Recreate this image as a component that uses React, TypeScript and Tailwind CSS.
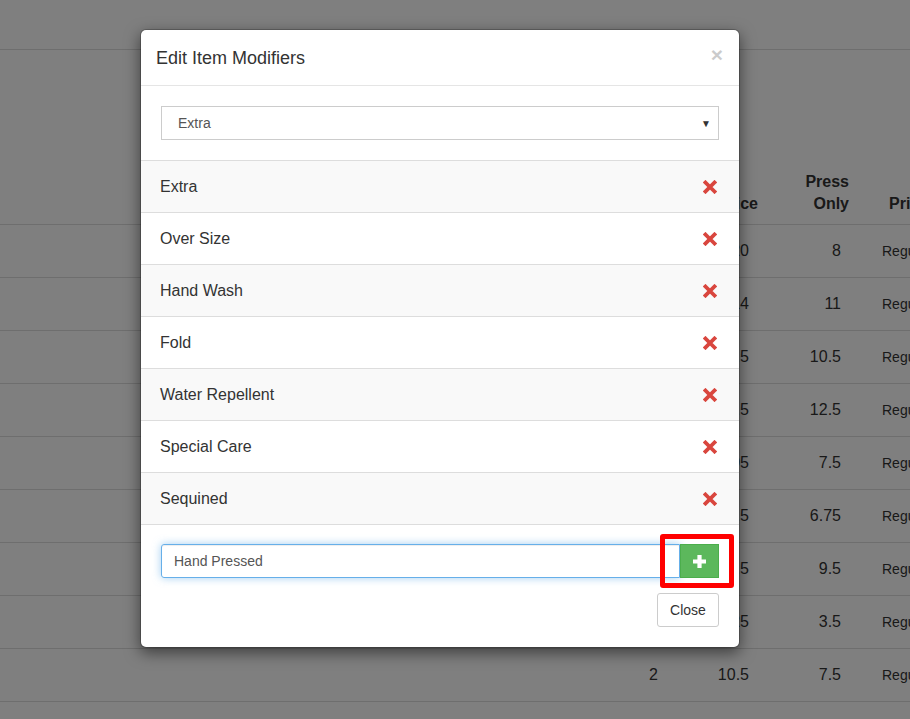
import React from "react";

const COLS = "grid grid-cols-[575px_93px_91px_91px_1fr]";

function RemoveIcon() {
  return (
    <svg width="14" height="14" viewBox="0 0 14 14" aria-hidden="true">
      <path d="M2.5 2.5 L11.5 11.5 M11.5 2.5 L2.5 11.5" stroke="#d9463e" strokeWidth="3.8" strokeLinecap="square" fill="none" />
    </svg>
  );
}

function PlusIcon() {
  return (
    <svg width="15" height="15" viewBox="0 0 15 15" aria-hidden="true">
      <path d="M7.5 1 V14 M1 7.5 H14" stroke="#ffffff" strokeWidth="4.2" fill="none" />
    </svg>
  );
}

export default function App() {
  const rows: [string, string, string][] = [
    ["1", "20", "8"],
    ["2", "14", "11"],
    ["1", "12.5", "10.5"],
    ["1", "14.5", "12.5"],
    ["1", "9.95", "7.5"],
    ["1", "8.5", "6.75"],
    ["1", "12.5", "9.5"],
    ["1", "5.25", "3.5"],
    ["2", "10.5", "7.5"],
  ];
  const mods = ["Extra", "Over Size", "Hand Wash", "Fold", "Water Repellent", "Special Care", "Sequined"];

  return (
    <div className="relative h-[719px] w-[910px] overflow-hidden bg-white font-['Liberation_Sans',Arial,sans-serif] text-[#333]">
      {/* background page */}
      <div className="h-[50px] border-b border-[#ddd]" />
      <div className={`${COLS} h-[175px] border-b border-[#ddd] items-end pb-[9px] text-[16px] font-bold leading-[22px]`}>
        <div />
        <div className="pr-[1px] text-right">Qty</div>
        <div className="pr-[1px] text-right">Price</div>
        <div className="pr-[1px] text-right">
          Press
          <br />
          Only
        </div>
        <div className="whitespace-nowrap pl-[39px]">Price Type</div>
      </div>
      {rows.map((r, i) => (
        <div key={i} className={`${COLS} h-[53px] items-center border-b border-[#ddd] text-[16px]`}>
          <div />
          <div className="pr-[10px] text-right">{r[0]}</div>
          <div className="pr-[10px] text-right">{r[1]}</div>
          <div className="pr-[9px] text-right">{r[2]}</div>
          <div className="whitespace-nowrap pl-[32px] text-[14px]">Regular</div>
        </div>
      ))}

      {/* backdrop */}
      <div className="absolute inset-0 bg-[rgba(0,0,0,0.5)]" />

      {/* modal */}
      <div className="absolute left-[140px] top-[29px] w-[600px] rounded-[6px] border border-[rgba(0,0,0,0.2)] bg-white bg-clip-padding shadow-[0_5px_15px_rgba(0,0,0,0.5)]">
        <div className="flex h-[56px] items-center justify-between border-b border-[#e5e5e5] pl-[15px] pr-[16px]">
          <div className="pt-[2px] text-[18px] leading-[25px] text-[#333]">Edit Item Modifiers</div>
          <div className="-mt-[7px] text-[21px] font-bold leading-none text-black opacity-20">×</div>
        </div>

        <div className="px-[20px] py-[20px]">
          <div className="flex h-[34px] items-center justify-between border border-[#ccc] pl-[16px] pr-[7px] text-[14px] text-[#555]">
            <span>Extra</span>
            <span className="text-[10px] text-[#333]">▼</span>
          </div>
        </div>

        <div className="border-b border-[#ddd]">
          {mods.map((m, i) => (
            <div
              key={m}
              className={`flex h-[52px] items-center justify-between border-t border-[#ddd] pl-[19px] pr-[22px] text-[16px] text-[#333] ${
                i % 2 === 0 ? "bg-[#f9f9f9]" : "bg-white"
              }`}
            >
              <span>{m}</span>
              <RemoveIcon />
            </div>
          ))}
        </div>

        <div className="px-[20px] pb-[20px] pt-[19px]">
          <div className="flex h-[34px]">
            <div className="flex flex-1 items-center rounded-l-[3px] border border-[#66afe9] px-[12px] text-[14px] text-[#555] shadow-[inset_0_1px_1px_rgba(0,0,0,0.075),0_0_8px_rgba(102,175,233,0.6)]">
              Hand Pressed
            </div>
            <div className="flex w-[39px] items-center justify-center border border-[#4cae4c] bg-[#5cb85c] pr-[1px]">
              <PlusIcon />
            </div>
          </div>
          <div className="mt-[15px] flex justify-end">
            <div className="flex h-[34px] w-[62px] items-center justify-center rounded-[3px] border border-[#ccc] bg-white text-[14px] text-[#333]">
              Close
            </div>
          </div>
        </div>
      </div>

      {/* highlight box */}
      <div className="absolute left-[660px] top-[534px] h-[54px] w-[74px] rounded-[3px] border-[5px] border-[#ff0000]" />
    </div>
  );
}
